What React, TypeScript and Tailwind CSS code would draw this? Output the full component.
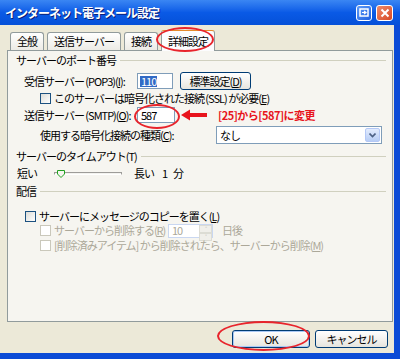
import React from 'react';

const font = "font-['Noto_Sans_CJK_JP','Noto_Sans',sans-serif]";

function Box({ disabled }: { disabled?: boolean }) {
  return (
    <span
      className={`inline-block w-[11px] h-[11px] border shrink-0 ${
        disabled ? 'border-[#cac8bb] bg-white' : 'border-[#1c5180] bg-gradient-to-br from-[#dcdcd7] to-white'
      }`}
    />
  );
}

function GroupLabel({ text }: { text: string }) {
  return (
    <div className="flex items-center h-[14px] pl-[8px] pr-[6px]">
      <span className="text-[11px] tracking-[-1px] text-black leading-none whitespace-nowrap">{text}</span>
      <span className="flex-1 ml-[4px] h-px bg-[#d0d0bf]" />
    </div>
  );
}

function XpButton({ label, isDefault, w }: { label: React.ReactNode; isDefault?: boolean; w: string }) {
  return (
    <button
      type="button"
      className={`${w} h-[18px] rounded-[3px] border border-[#003c74] bg-gradient-to-b from-white to-[#e6e5de] text-[11px] tracking-[-1px] leading-none text-black flex items-center justify-center ${
        isDefault ? 'shadow-[inset_0_0_0_1px_#a9c8f5]' : ''
      }`}
    >
      {label}
    </button>
  );
}

export default function App() {
  return (
    <div className={`w-[400px] h-[359px] bg-[#ece9d8] flex flex-col overflow-hidden relative ${font}`}>
      {/* title bar */}
      <div className="h-[25px] shrink-0 bg-gradient-to-b from-[#3a86f3] via-[#0a5ae6] to-[#0550d8] flex items-center pl-[5px] pr-[7px]">
        <span className="text-white font-bold text-[12px] tracking-[-1px] leading-none [text-shadow:1px_1px_0_#0a1e78]">
          インターネット電子メール設定
        </span>
        <div className="ml-auto flex gap-[4px]">
          <div className="w-[16px] h-[16px] rounded-[3px] border border-white bg-gradient-to-br from-[#5f9bf7] to-[#1f5fe0] flex items-center justify-center">
            <svg width="10" height="9" viewBox="0 0 10 9">
              <rect x="1" y="1" width="8" height="7" fill="none" stroke="white" strokeWidth="1.5" />
              <path d="M3 4.5h4M5 3l2 1.5L5 6" fill="none" stroke="white" strokeWidth="1.2" />
            </svg>
          </div>
          <div className="w-[17px] h-[16px] rounded-[3px] border border-white bg-gradient-to-br from-[#ef8a6a] to-[#d6461f] flex items-center justify-center">
            <svg width="10" height="10" viewBox="0 0 10 10">
              <path d="M1.5 1.5l7 7M8.5 1.5l-7 7" stroke="white" strokeWidth="2" />
            </svg>
          </div>
        </div>
      </div>

      <div className="flex-1 flex border-r-[6px] border-b-[6px] border-[#0b4bd6]">
        <div className="flex-1 flex flex-col pl-[7px] pr-[1px]">
          {/* tabs */}
          <div className="h-[25px] flex items-end pl-[3px] gap-[3px] relative">
            {['全般', '送信サーバー', '接続'].map((t) => (
              <div
                key={t}
                className="h-[18px] px-[6px] border border-b-0 border-[#919b9c] rounded-t-[3px] bg-gradient-to-b from-white to-[#ecebe5] text-[11px] tracking-[-1px] leading-none flex items-center"
              >
                {t}
              </div>
            ))}
            <div className="h-[21px] px-[6px] -mb-px border border-b-0 border-[#919b9c] border-t-[#e68b2c] rounded-t-[3px] bg-[#fcfcfe] text-[11px] tracking-[-1px] leading-none flex items-center relative z-10">
              詳細設定
            </div>
            <div className="absolute left-[149px] top-[2px] w-[58px] h-[25px] rounded-[50%] border-2 border-[#e8242c] z-20" />
          </div>

          {/* panel */}
          <div className="h-[272px] border border-[#919b9c] bg-[#f6f5f0] flex flex-col text-[11px] tracking-[-1px] leading-none text-black relative">
            <div className="h-[2px]" />
            <GroupLabel text="サーバーのポート番号" />

            <div className="flex items-center h-[18px] mt-[5px] pl-[16px]">
              <span className="w-[113px]">受信サーバー (POP3)(<u>I</u>):</span>
              <span className="w-[36px] h-[16px] border border-[#7f9db9] bg-white flex items-center pl-[2px]">
                <span className="bg-[#316ac5] text-white px-px">110</span>
              </span>
              <span className="ml-[7px]">
                <XpButton w="w-[71px]" label={<>標準設定(<u>D</u>)</>} />
              </span>
            </div>

            <div className="flex items-center h-[16px] pl-[32px] gap-[3px]">
              <Box />
              <span>このサーバーは暗号化された接続 (SSL) が必要(<u>E</u>)</span>
            </div>

            <div className="flex items-center h-[18px] pl-[16px]">
              <span className="w-[113px]">送信サーバー (SMTP)(<u>O</u>):</span>
              <span className="w-[38px] h-[16px] border border-[#7f9db9] bg-white flex items-center pl-[3px]">587</span>
              <svg width="26" height="12" viewBox="0 0 26 12" className="ml-[6px]">
                <path d="M0 6L9 0.5V4H26V8H9V11.5Z" fill="#e8141c" />
              </svg>
              <span className="ml-[11px] text-[#e8141c] font-bold tracking-[-0.5px]">[25]から[587]に変更</span>
              <div className="absolute left-[126px] top-[53px] w-[46px] h-[25px] rounded-[50%] border-2 border-[#e8242c]" />
            </div>

            <div className="flex items-center h-[18px] mt-[2px] pl-[32px]">
              <span className="w-[176px]">使用する暗号化接続の種類(<u>C</u>):</span>
              <span className="w-[166px] h-[18px] border border-[#7f9db9] bg-white flex items-center pl-[3px]">
                なし
                <span className="ml-auto mr-px w-[15px] h-[14px] rounded-[2px] bg-gradient-to-b from-[#e3ecfd] to-[#b7cdf5] border border-[#b4c8f6] flex items-center justify-center">
                  <svg width="7" height="5" viewBox="0 0 7 5">
                    <path d="M0.5 0.5L3.5 3.5L6.5 0.5" fill="none" stroke="#4d6185" strokeWidth="1.6" />
                  </svg>
                </span>
              </span>
            </div>

            <div className="mt-[5px]" />
            <GroupLabel text="サーバーのタイムアウト(T)" />

            <div className="flex items-center h-[14px] mt-[3px] pl-[9px]">
              <span className="w-[37px]">短い</span>
              <span className="relative w-[68px] h-[3px] border border-[#9d9c99] bg-[#f3f3ef] border-b-white">
                <svg width="8" height="8" viewBox="0 0 8 8" className="absolute left-[2px] -top-[3px]">
                  <path d="M0.5 0.5H7.5V4L4 7.5L0.5 4Z" fill="#f6f5f0" stroke="#21a121" strokeWidth="1" />
                </svg>
              </span>
              <span className="ml-[12px]">長い</span>
              <span className="ml-[8px]">1</span>
              <span className="ml-[6px]">分</span>
            </div>

            <div className="mt-[4px]" />
            <GroupLabel text="配信" />

            <div className="flex items-center h-[14px] mt-[11px] pl-[17px] gap-[3px]">
              <Box />
              <span>サーバーにメッセージのコピーを置く(<u>L</u>)</span>
            </div>

            <div className="flex items-center h-[15px] pl-[32px] text-[#aca899]">
              <Box disabled />
              <span className="ml-[3px] w-[114px]">サーバーから削除する(<u>R</u>)</span>
              <span className="w-[45px] h-[14px] border border-[#c9d7f1] bg-white flex items-center pl-[3px]">
                10
                <span className="ml-auto w-[13px] h-[12px] flex flex-col">
                  <span className="flex-1 bg-[#f0efea] border border-[#dcdcd4] text-[6px] flex items-center justify-center">˄</span>
                  <span className="flex-1 bg-[#f0efea] border border-[#dcdcd4] text-[6px] flex items-center justify-center">˅</span>
                </span>
              </span>
              <span className="ml-[9px]">日後</span>
            </div>

            <div className="flex items-center h-[14px] pl-[32px] text-[#aca899] gap-[3px]">
              <Box disabled />
              <span>[削除済みアイテム] から削除されたら、サーバーから削除(<u>M</u>)</span>
            </div>
          </div>

          {/* buttons */}
          <div className="flex justify-end items-center mt-[8px] pr-[5px] gap-[5px] relative">
            <XpButton w="w-[78px]" isDefault label="OK" />
            <XpButton w="w-[73px]" label="キャンセル" />
            <div className="absolute left-[210px] -top-[9px] w-[93px] h-[30px] rounded-[50%] border-2 border-[#e8242c]" />
          </div>
        </div>
      </div>
    </div>
  );
}
